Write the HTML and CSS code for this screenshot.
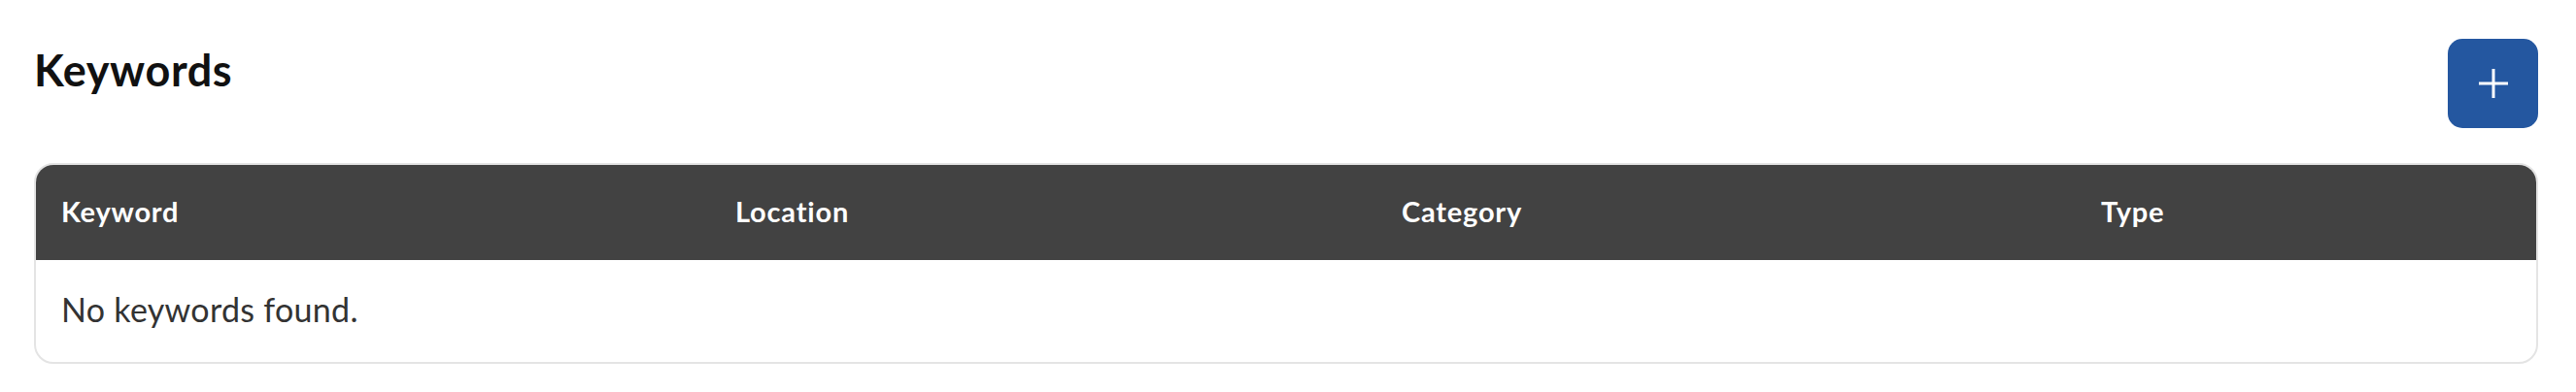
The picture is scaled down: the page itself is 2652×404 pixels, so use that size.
FILE: index.html
```html
<!DOCTYPE html>
<html>
<head>
<meta charset="utf-8">
<link rel="stylesheet" href="styles.css">
</head>
<body>
<div class="page">
  <div class="top">
    <h1 class="title">Keywords</h1>
    <button class="add-btn" aria-label="Add keyword">
      <svg width="32" height="32" viewBox="0 0 32 32"><path d="M16 1V31M1 16H31" stroke="#fff" stroke-width="3" fill="none"/></svg>
    </button>
  </div>
  <div class="table">
    <div class="thead">
      <div class="th">Keyword</div>
      <div class="th">Location</div>
      <div class="th">Category</div>
      <div class="th">Type</div>
    </div>
    <div class="tbody">
      <div class="empty">No keywords found.</div>
    </div>
  </div>
</div>
</body>
</html>
```

FILE: styles.css
```css
html, body {
  margin: 0;
  padding: 0;
  background: #fff;
}
.page {
  width: 2578px;
  padding: 40px 39px 0 35px;
  font-family: Lato, "Open Sans", sans-serif;
}
.top {
  display: flex;
  justify-content: space-between;
  align-items: flex-start;
  height: 92px;
}
.title {
  margin: 6px 0 0 0;
  font-size: 45px;
  font-weight: 700;
  letter-spacing: 0.6px;
  color: #111;
  line-height: 52px;
}
.add-btn {
  width: 93px;
  height: 92px;
  border: none;
  border-radius: 15px;
  background: #2457a0;
  display: flex;
  align-items: center;
  justify-content: center;
  padding: 0;
}
.table {
  margin-top: 36px;
  border: 2px solid #e4e4e4;
  border-radius: 20px;
  overflow: hidden;
}
.thead {
  display: grid;
  grid-template-columns: 694px 686px 720px 1fr;
  background: #424242;
  height: 98px;
  align-items: center;
}
.th {
  padding-left: 26px;
  padding-bottom: 3px;
  color: #fff;
  font-size: 29px;
  font-weight: 700;
  letter-spacing: 0.8px;
}
.tbody {
  height: 105px;
  display: flex;
  align-items: center;
}
.empty {
  padding-left: 26px;
  padding-bottom: 4px;
  font-size: 34px;
  letter-spacing: 0.3px;
  color: #333;
}
```
